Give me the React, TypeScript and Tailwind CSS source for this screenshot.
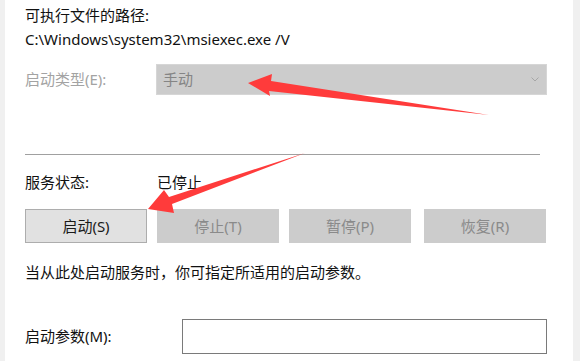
import type { FC } from 'react'

const font = { fontFamily: '"Noto Sans", "Noto Sans CJK SC", sans-serif' }

const ActionButton: FC<{ label: string; enabled?: boolean; className?: string }> = ({ label, enabled, className = '' }) => (
  <button
    type="button"
    className={`flex h-[34px] w-[122px] items-center justify-center border text-[15px] ${
      enabled
        ? 'border-[#adadad] bg-[#e1e1e1] text-[#1a1a1a]'
        : 'border-[#cccccc] bg-[#cccccc] text-[#8a8a8a]'
    } ${className}`}
  >
    {label}
  </button>
)

const Arrows: FC = () => (
  <svg className="pointer-events-none absolute left-0 top-0" width="580" height="361" viewBox="0 0 580 361">
    <polygon points="248,83 272,74 271,81 489,115 269,91 270,96" fill="#ff3b3b" />
    <polygon points="148,209 164,190 169,197 305,153 172,204 174,213" fill="#ff3b3b" />
  </svg>
)

export default function App() {
  return (
    <div className="relative flex h-[361px] w-[580px] overflow-hidden bg-[#f0f0f0] text-[15px] text-[#111]" style={font}>
      <div className="w-[5px] shrink-0 bg-[#f0f0f0]" />
      <div className="flex flex-1 flex-col bg-white pl-[20px] pr-[26px] pt-[3px]">
        <div className="h-[24px] leading-[24px]">可执行文件的路径:</div>
        <div className="h-[24px] leading-[24px]">C:\Windows\system32\msiexec.exe /V</div>

        <div className="mt-[13px] flex h-[31px] items-center">
          <span className="w-[131px] text-[#a3a3a3]">启动类型(E):</span>
          <div className="flex h-full flex-1 items-center justify-between border border-[#d6d6d6] bg-[#cccccc] pl-[6px] pr-[6px]">
            <span className="text-[#858585]">手动</span>
            <svg width="8" height="5" viewBox="0 0 8 5" className="mr-[1px]">
              <polyline points="0.5,0.5 4,4 7.5,0.5" fill="none" stroke="#a6a6a6" strokeWidth="1" />
            </svg>
          </div>
        </div>

        <div className="mt-[59px] mr-[7px] h-px bg-[#a0a0a0]" />

        <div className="mt-[15px] flex h-[24px] items-center">
          <span className="w-[132px]">服务状态:</span>
          <span>已停止</span>
        </div>

        <div className="mt-[15px] flex gap-[10px]">
          <ActionButton label="启动(S)" enabled />
          <ActionButton label="停止(T)" />
          <ActionButton label="暂停(P)" />
          <ActionButton label="恢复(R)" className="ml-[3px]" />
        </div>

        <div className="mt-[17px] h-[24px] leading-[24px]">当从此处启动服务时，你可指定所适用的启动参数。</div>

        <div className="mt-[35px] flex items-center">
          <span className="w-[157px]">启动参数(M):</span>
          <div className="h-[35px] flex-1 border border-[#7a7a7a] bg-white" />
        </div>
      </div>
      <div className="w-[7px] shrink-0 bg-[#f0f0f0]" />
      <Arrows />
    </div>
  )
}
